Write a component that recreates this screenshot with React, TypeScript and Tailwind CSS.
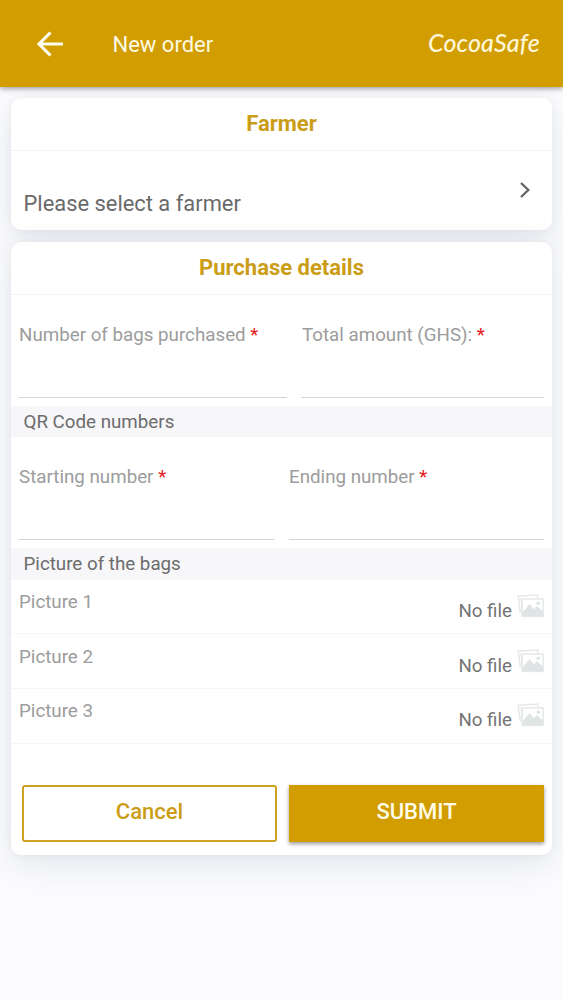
import type { ReactNode } from "react";

const pictures = ["Picture 1", "Picture 2", "Picture 3"];

function BackIcon() {
  return (
    <svg width="26" height="26" viewBox="0 0 26 26" fill="none" stroke="#fffdf0" strokeWidth="3.1">
      <path d="M26 13H2.5M13.5 1.5L2 13l11.5 11.5" />
    </svg>
  );
}

function ChevronIcon() {
  return (
    <svg width="10" height="16" viewBox="0 0 10 16" fill="none" stroke="#666" strokeWidth="2.4">
      <path d="M1 1l7.3 7L1 15" />
    </svg>
  );
}

function PicturesIcon() {
  return (
    <svg width="28" height="24" viewBox="0 0 28 24" fill="none">
      <path d="M3.4 18.6L1.2 2.2 20.6 1l.4 3" stroke="#e6e9ea" strokeWidth="1.6" />
      <path d="M3 4l2 15V4.5z" fill="#eceeee" />
      <rect x="5.2" y="5" width="21" height="17.4" stroke="#e6e9ea" strokeWidth="1.6" />
      <path d="M5.5 18.5l7-8.5 4.4 5.2 3-3.2 6 5.5V22H5.5z" fill="#dfe4e5" />
      <circle cx="21.3" cy="9.2" r="1.9" fill="#e2e6e7" />
    </svg>
  );
}

function Logo() {
  return (
    <span className="block w-[114px] pb-1 text-center font-['Lato',sans-serif] text-[25px] leading-10 font-medium tracking-[0.2px] whitespace-nowrap text-[#fff6d8] italic">
      CocoaSafe
    </span>
  );
}

function Card({ title, children }: { title: string; children: ReactNode }) {
  return (
    <section className="rounded-[10px] bg-white shadow-[0_10px_36px_rgba(50,70,110,0.12),0_1px_8px_rgba(60,80,90,0.06)]">
      <h2 className="flex h-[53px] items-center justify-center border-b border-[#f3f3f5] text-[22px] leading-[32px] font-bold text-[#cb9d16]">
        {title}
      </h2>
      {children}
    </section>
  );
}

function Field({ label, className }: { label: string; className: string }) {
  return (
    <label className={`block h-[103px] border-b border-[#d3d5d5] pt-[27px] text-[18.75px] leading-[26px] text-[#9c9c9c] ${className}`}>
      {label} <span className="text-[#e32020]">*</span>
    </label>
  );
}

function SectionBar({ children }: { children: ReactNode }) {
  return (
    <h3 className="flex h-[31.3px] items-center bg-[#f7f6f9] pt-px pl-[12.5px] text-[18.75px] text-[#6c6c6c]">
      {children}
    </h3>
  );
}

export default function App() {
  return (
    <div className="min-h-[1000px] bg-[#fcfcfe] font-['Roboto',sans-serif]">
      <header className="relative flex h-[87px] items-center bg-[#d19d00] pr-[22px] pl-[37px] shadow-[0_1px_6px_rgba(0,0,0,0.45)]">
        <BackIcon />
        <h1 className="ml-[49.5px] pt-px text-[22px] text-[#fffbe6]">New order</h1>
        <div className="ml-auto">
          <Logo />
        </div>
      </header>

      <main className="flex flex-col gap-3 px-[11px] pt-[11px]">
        <Card title="Farmer">
          <button className="flex h-[79px] w-full justify-between pr-[22px] pl-[12.5px] text-left">
            <span className="pt-[39px] text-[21.9px] leading-7 text-[#6a6a6a]">Please select a farmer</span>
            <span className="pt-[31px]">
              <ChevronIcon />
            </span>
          </button>
        </Card>

        <Card title="Purchase details">
          <div className="flex justify-between px-2 pb-2">
            <Field label="Number of bags purchased" className="w-[268px]" />
            <Field label="Total amount (GHS):" className="w-[243px] pl-px" />
          </div>
          <SectionBar>QR Code numbers</SectionBar>
          <div className="flex justify-between px-2 pb-2">
            <Field label="Starting number" className="w-[255px]" />
            <Field label="Ending number" className="w-[255px]" />
          </div>
          <SectionBar>Picture of the bags</SectionBar>

          <ul>
            {pictures.map((picture) => (
              <li
                key={picture}
                className="flex h-[54.7px] justify-between border-b border-[#f6f6f7] pr-[7px] pl-2 text-[18.75px] leading-[26px]"
              >
                <span className="pt-[9.3px] text-[#9c9c9c]">{picture}</span>
                <span className="flex gap-[5px] text-[#747474]">
                  <span className="pt-[18.3px]">No file</span>
                  <span className="pt-[14.3px]">
                    <PicturesIcon />
                  </span>
                </span>
              </li>
            ))}
          </ul>

          <div className="grid grid-cols-2 gap-3 pt-[41px] pr-2 pb-[13px] pl-[11px] text-[22px] font-medium">
            <button className="h-[57px] rounded-[3px] border-2 border-[#cda223] pb-[3px] text-[#cb9d16]">Cancel</button>
            <button className="h-[57px] bg-[#d19d00] pb-[3px] text-[#fffbe6] shadow-[0_2px_4px_rgba(0,0,0,0.4)]">
              SUBMIT
            </button>
          </div>
        </Card>
      </main>
    </div>
  );
}
